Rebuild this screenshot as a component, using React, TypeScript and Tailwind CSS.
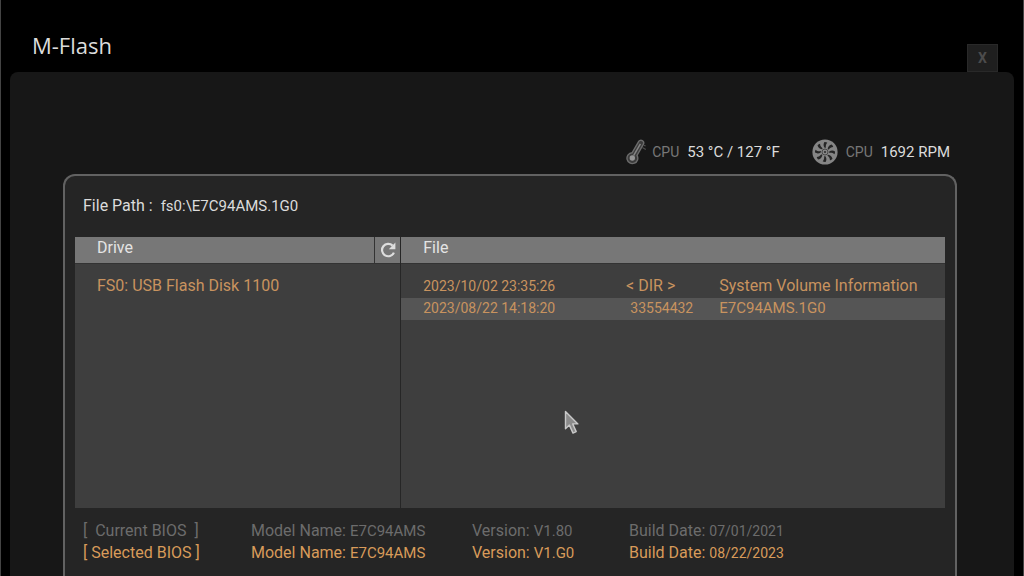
import { useState } from "react"
import { clsx } from "clsx"

type FileEntry = { modified: string; size: string; name: string; isDir?: boolean }
type BiosInfo = { label: string; model: string; version: string; buildDate: string; selected?: boolean }

const files: FileEntry[] = [
  { modified: "2023/10/02 23:35:26", size: "< DIR >", name: "System Volume Information", isDir: true },
  { modified: "2023/08/22 14:18:20", size: "33554432", name: "E7C94AMS.1G0" },
]

const biosRows: BiosInfo[] = [
  { label: "[  Current BIOS  ]", model: "E7C94AMS", version: "V1.80", buildDate: "07/01/2021" },
  { label: "[ Selected BIOS ]", model: "E7C94AMS", version: "V1.G0", buildDate: "08/22/2023", selected: true },
]

const BLADES = [0, 45, 90, 135, 180, 225, 270, 315]

const ThermometerIcon = () => (
  <svg width="22" height="26" viewBox="0 0 22 26" fill="none" aria-hidden="true">
    <path d="M12.6 2.6a2.7 2.7 0 0 1 4.7 2.7L11 16.4a5.4 5.4 0 1 1-4.9-2.6Z" fill="#3c3c3c" stroke="#6c6c6c" strokeWidth="1.4" />
    <circle cx="6.3" cy="19" r="2.7" fill="#969696" />
    <path d="M7.6 16.6 14.4 4.8" stroke="#858585" strokeWidth="1.5" />
    <path d="m16.4 8.4 3.4 2M18 6.2l1.6.9" stroke="#4e4e4e" strokeWidth="1.2" />
  </svg>
)

const FanIcon = () => (
  <svg width="26" height="26" viewBox="0 0 26 26" aria-hidden="true">
    <circle cx="13" cy="13" r="12.6" fill="#858585" />
    {BLADES.map((angle) => (
      <path key={angle} d="M12.6 8.8C11.4 7 11.2 5 12.4 3c1.4-.1 2.2.2 2.9.7-1.3 1.3-1.7 3-1.4 5.1Z" fill="#262626" transform={`rotate(${angle} 13 13)`} />
    ))}
    <circle cx="13" cy="13" r="3" fill="#858585" stroke="#4a4a4a" strokeWidth="1" />
    <circle cx="13" cy="13" r="1" fill="#2a2a2a" />
  </svg>
)

const RefreshIcon = () => (
  <svg width="18" height="18" viewBox="0 0 18 18" fill="none" aria-hidden="true">
    <path d="M13.6 4.6A6.2 6.2 0 1 0 14.9 11.6" stroke="#dedede" strokeWidth="2.2" />
    <path d="M16.4 1.4v6.8H9.8Z" fill="#dedede" />
  </svg>
)

const Pointer = () => (
  <svg className="pointer-events-none absolute left-[563px] top-[410px]" width="16" height="25" viewBox="0 0 16 25" aria-hidden="true">
    <path d="M1.5 1.5v17.2l3.9-3.6 3.6 8 3.2-1.5-3.5-7.7h5.2Z" fill="#8b8b8b" stroke="#c8c8c8" strokeWidth="1.4" strokeLinejoin="round" />
  </svg>
)

const Header = () => (
  <header className="flex h-18 items-end justify-between pl-[22px] pr-4">
    <h1 className="pb-[13px] font-['Open_Sans',sans-serif] text-[22px] leading-7 text-[#dcdcdc]">M-Flash</h1>
    <button type="button" aria-label="Close" className="h-7 w-[31px] border border-[#292929] bg-[#1f1f1f] text-sm font-bold text-[#4c4c4c]">
      X
    </button>
  </header>
)

const SystemStatus = () => (
  <div className="flex items-center justify-end gap-8 pr-[7px] text-[15px] text-[#dcdcdc]">
    <div className="flex items-center gap-1">
      <ThermometerIcon />
      <span className="text-sm text-[#777]">CPU</span>
      <span className="pl-1">53 °C / 127 °F</span>
    </div>
    <div className="flex items-center gap-2">
      <FanIcon />
      <span className="text-sm text-[#777]">CPU</span>
      <span>1692 RPM</span>
    </div>
  </div>
)

const DrivePane = () => (
  <section className="border-r border-[#262626]">
    <div className="flex h-[27px] border-b border-[#333] bg-[#777]">
      <h2 className="flex-1 pl-[22px] leading-[22px] text-[#e4e4e4]">Drive</h2>
      <button type="button" aria-label="Refresh drives" className="flex w-[26px] items-center justify-center border-l border-[#333]">
        <RefreshIcon />
      </button>
    </div>
    <ul className="pt-3">
      <li className="flex">
        <button type="button" className="pl-[22px] leading-5 text-[#c8935f]">
          FS0: USB Flash Disk 1100
        </button>
      </li>
    </ul>
  </section>
)

const FilePane = () => {
  const [selected, setSelected] = useState("E7C94AMS.1G0")

  return (
    <section>
      <h2 className="h-[27px] border-b border-[#333] bg-[#777] pl-[22px] leading-[22px] text-[#e4e4e4]">File</h2>
      <table className="mt-3 w-full table-fixed text-left leading-5 text-[#c8935f]">
        <colgroup>
          <col className="w-[200px]" />
          <col className="w-[92px]" />
          <col />
        </colgroup>
        <tbody>
          {files.map(({ modified, size, name, isDir }) => (
            <tr key={name} onClick={() => setSelected(name)} className={clsx("cursor-default align-baseline", selected === name && "bg-[#555]")}>
              <td className="pb-0.5 pl-[22px] text-sm leading-5">{modified}</td>
              <td className={clsx("pb-0.5 text-right leading-5", isDir ? "pr-[18px]" : "text-sm")}>{size}</td>
              <td className={clsx("pb-0.5 pl-[26px] leading-5", !isDir && "text-[15px]")}>{name}</td>
            </tr>
          ))}
        </tbody>
      </table>
    </section>
  )
}

const BiosSummary = () => (
  <table className="mt-3 ml-2 table-fixed text-left leading-[22px]">
    <colgroup>
      <col className="w-[168px]" />
      <col className="w-[221px]" />
      <col className="w-[157px]" />
      <col className="w-[200px]" />
    </colgroup>
    <tbody>
      {biosRows.map(({ label, model, version, buildDate, selected }) => (
        <tr key={label} className={clsx("whitespace-pre", selected ? "text-[#d89b5a]" : "text-[#6c6c6c]")}>
          <td>{label}</td>
          <td>
            Model Name: <span className="text-[15px]">{model}</span>
          </td>
          <td>
            Version: <span className="text-[15px]">{version}</span>
          </td>
          <td>
            Build Date: <span className="text-sm leading-[22px]">{buildDate}</span>
          </td>
        </tr>
      ))}
    </tbody>
  </table>
)

export default function App() {
  return (
    <div className="relative flex min-h-screen flex-col border-x border-[#444] bg-black px-[9px] font-[Roboto,sans-serif] text-base">
      <Header />
      <main className="flex flex-1 flex-col rounded-t-lg bg-[#171717] pt-[67px] pr-[57px] pl-[53px]">
        <SystemStatus />
        <div className="mt-[9px] flex-1 rounded-t-xl border-2 border-b-0 border-[#626262] bg-[#252525] px-2.5 pt-[18px]">
          <p className="pl-2 leading-6 whitespace-pre text-[#dcdcdc]">
            File Path :  <span className="text-[15px]">fs0:\E7C94AMS.1G0</span>
          </p>
          <div className="mt-[19px] grid min-h-[271px] grid-cols-[3fr_5fr] bg-[#3e3e3e]">
            <DrivePane />
            <FilePane />
          </div>
          <BiosSummary />
        </div>
      </main>
      <Pointer />
    </div>
  )
}
